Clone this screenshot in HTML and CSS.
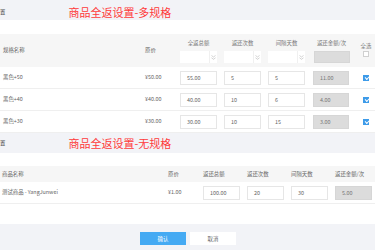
FILE: index.html
```
<!DOCTYPE html>
<html lang="zh-CN">
<head>
    <meta charset="UTF-8">
    <title>商品全返设置</title>
    <link rel="stylesheet" href="styles.css">
</head>
<body>
    <div class="band band-top">
        <span class="crumb">置</span>
        <span class="tag">商品全返设置-多规格</span>
    </div>
    <div class="spacer"></div>

    <div class="sku-table">
        <div class="row head">
            <div class="c-text">规格名称</div>
            <div class="c-text">原价</div>
            <div class="c-field">
                <span class="lbl">全返总额</span>
                <div class="select"><span class="arrow"><svg width="5" height="5" viewBox="0 0 5 5"><path d="M0.5 0.5 L2.5 2 L4.5 0.5 M0.5 2.8 L2.5 4.3 L4.5 2.8" fill="none" stroke="#b5b5b5" stroke-width="0.6"/></svg></span></div>
            </div>
            <div class="c-field">
                <span class="lbl">返还次数</span>
                <div class="select"><span class="arrow"><svg width="5" height="5" viewBox="0 0 5 5"><path d="M0.5 0.5 L2.5 2 L4.5 0.5 M0.5 2.8 L2.5 4.3 L4.5 2.8" fill="none" stroke="#b5b5b5" stroke-width="0.6"/></svg></span></div>
            </div>
            <div class="c-field">
                <span class="lbl">间隔天数</span>
                <div class="select"><span class="arrow"><svg width="5" height="5" viewBox="0 0 5 5"><path d="M0.5 0.5 L2.5 2 L4.5 0.5 M0.5 2.8 L2.5 4.3 L4.5 2.8" fill="none" stroke="#b5b5b5" stroke-width="0.6"/></svg></span></div>
            </div>
            <div class="c-field">
                <span class="lbl">返还金额/次</span>
                <div class="box grey"></div>
            </div>
            <div class="c-check">
                <span class="lbl">全选</span>
                <span class="check"></span>
            </div>
        </div>

        <div class="row">
            <div class="c-text">黑色+50</div>
            <div class="c-text">¥50.00</div>
            <div class="c-cell"><div class="box">55.00</div></div>
            <div class="c-cell"><div class="box">5</div></div>
            <div class="c-cell"><div class="box">5</div></div>
            <div class="c-cell"><div class="box grey">11.00</div></div>
            <div class="c-cell c-center"><span class="check on"></span></div>
        </div>
        <div class="row">
            <div class="c-text">黑色+40</div>
            <div class="c-text">¥40.00</div>
            <div class="c-cell"><div class="box">40.00</div></div>
            <div class="c-cell"><div class="box">10</div></div>
            <div class="c-cell"><div class="box">6</div></div>
            <div class="c-cell"><div class="box grey">4.00</div></div>
            <div class="c-cell c-center"><span class="check on"></span></div>
        </div>
        <div class="row">
            <div class="c-text">黑色+30</div>
            <div class="c-text">¥30.00</div>
            <div class="c-cell"><div class="box">30.00</div></div>
            <div class="c-cell"><div class="box">10</div></div>
            <div class="c-cell"><div class="box">15</div></div>
            <div class="c-cell"><div class="box grey">3.00</div></div>
            <div class="c-cell c-center"><span class="check on"></span></div>
        </div>
    </div>

    <div class="band">
        <span class="crumb">置</span>
        <span class="tag">商品全返设置-无规格</span>
    </div>
    <div class="spacer small"></div>

    <div class="goods-table">
        <div class="row head">
            <div class="c-text">商品名称</div>
            <div class="c-text">原价</div>
            <div class="c-text">返还总额</div>
            <div class="c-text">返还次数</div>
            <div class="c-text">间隔天数</div>
            <div class="c-text">返还金额/次</div>
        </div>
        <div class="row">
            <div class="c-text">测试商品 - YangJunwei</div>
            <div class="c-text">¥1.00</div>
            <div class="c-cell"><div class="box">100.00</div></div>
            <div class="c-cell"><div class="box">20</div></div>
            <div class="c-cell"><div class="box">30</div></div>
            <div class="c-cell"><div class="box grey wide">5.00</div></div>
        </div>
    </div>

    <div class="footer">
        <button class="btn primary">确认</button>
        <button class="btn">取消</button>
    </div>
</body>
</html>
```

FILE: styles.css
```
* {
    margin: 0;
    padding: 0;
    box-sizing: border-box;
}
body {
    width: 375px;
    height: 250px;
    overflow: hidden;
    background: #fff;
    font-family: "Noto Sans CJK SC", "Liberation Sans", sans-serif;
    font-size: 5.4px;
    line-height: 7px;
    color: #666;
}
.band {
    height: 20px;
    background: #f2f3f7;
    display: flex;
    align-items: center;
}
.band-top {
    padding-top: 4px;
}
.crumb {
    color: #444;
    font-size: 5.4px;
}
.tag {
    margin-left: 63px;
    font-size: 11px;
    line-height: 14px;
    color: #ff3a3a;
}
.spacer {
    height: 14px;
}
.spacer.small {
    height: 13px;
}
.row {
    display: grid;
    height: 22px;
    border-bottom: 1px solid #efefef;
}
.row.head {
    background: #f6f6f6;
    border-bottom: none;
}
.sku-table .row {
    grid-template-columns: 142px 35px 44px 44px 45px 45px 1fr;
    padding-left: 3px;
}
.sku-table .row.head {
    height: 33px;
}
.goods-table .row {
    grid-template-columns: 166px 35px 44px 44px 44px 1fr;
    padding-left: 2px;
}
.goods-table .row.head {
    height: 16px;
}
.c-text {
    align-self: center;
    white-space: nowrap;
}
.c-cell {
    display: flex;
    align-items: center;
}
.c-center {
    justify-content: center;
    padding-right: 1px;
}
.c-field {
    display: flex;
    flex-direction: column;
    justify-content: flex-end;
    align-items: center;
    width: 37px;
    gap: 4px;
    padding-bottom: 4px;
}
.c-check {
    display: flex;
    flex-direction: column;
    justify-content: flex-end;
    align-items: center;
    gap: 1px;
    padding-bottom: 10px;
    padding-right: 1px;
}
.lbl {
    color: #777;
    white-space: nowrap;
}
.select {
    width: 37px;
    height: 12px;
    background: #fff;
    display: flex;
    justify-content: flex-end;
}
.arrow {
    width: 8px;
    border-left: 1px solid #f0f0f0;
    display: flex;
    align-items: center;
    justify-content: center;
}
.arrow svg {
    display: block;
}
.box {
    width: 37px;
    height: 14px;
    border: 1px solid #e6e6e6;
    background: #fff;
    padding-left: 6px;
    line-height: 12px;
    color: #666;
}
.c-field .box.grey {
    height: 12px;
}
.box.grey {
    width: 36px;
    background: #dcdcdc;
    border-color: #d6d6d6;
    color: #777;
}
.box.grey.wide {
    width: 37px;
}
.check {
    width: 6px;
    height: 6px;
    background: #fff;
    border: 1px solid #d0d0d0;
    position: relative;
}
.check.on {
    background: #3d9be9;
    border-color: #3d9be9;
}
.check.on:after {
    content: '';
    position: absolute;
    left: 1px;
    top: 0px;
    width: 3px;
    height: 1.6px;
    border-left: 0.8px solid #fff;
    border-bottom: 0.8px solid #fff;
    transform: rotate(-45deg);
}
.footer {
    margin-top: 20px;
    height: 26px;
    background: #f2f3f7;
    display: flex;
    justify-content: center;
    gap: 4px;
    padding-top: 8px;
    padding-left: 1px;
}
.btn {
    width: 46px;
    height: 13px;
    border: none;
    background: #fff;
    font-family: inherit;
    font-size: 5.4px;
    color: #666;
}
.btn.primary {
    background: #45aaf3;
    color: #fff;
}
```
